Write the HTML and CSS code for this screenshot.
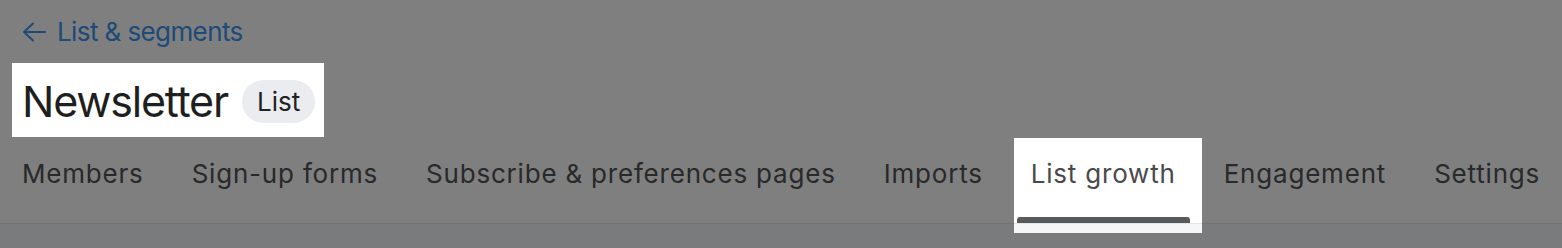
FILE: index.html
```html
<!DOCTYPE html>
<html lang="en">
<head>
<meta charset="utf-8">
<title>Newsletter</title>
<link rel="stylesheet" href="styles.css">
</head>
<body>
<div class="page">
  <header class="head">
    <a class="back" href="#">
      <svg class="back-icon" width="24" height="20" viewBox="0 0 24 20" aria-hidden="true">
        <path d="M23 10H2M11 1.5L2 10l9 8.5" fill="none" stroke="currentColor" stroke-width="2" stroke-linecap="round" stroke-linejoin="round"/>
      </svg>
      <span>List &amp; segments</span>
    </a>
    <div class="title-row">
      <h1 class="title">Newsletter</h1>
      <span class="badge">List</span>
    </div>
  </header>
  <nav class="tabs">
    <a class="tab" href="#"><span class="tab-label">Members</span><span class="tab-bar"></span></a>
    <a class="tab" href="#"><span class="tab-label">Sign-up forms</span><span class="tab-bar"></span></a>
    <a class="tab" href="#"><span class="tab-label">Subscribe &amp; preferences pages</span><span class="tab-bar"></span></a>
    <a class="tab" href="#"><span class="tab-label">Imports</span><span class="tab-bar"></span></a>
    <a class="tab tab-active" href="#"><span class="tab-label">List growth</span><span class="tab-bar"></span></a>
    <a class="tab" href="#"><span class="tab-label">Engagement</span><span class="tab-bar"></span></a>
    <a class="tab" href="#"><span class="tab-label">Settings</span><span class="tab-bar"></span></a>
  </nav>
  <main class="content"></main>
</div>
<div class="spotlight-overlay"></div>
</body>
</html>
```

FILE: styles.css
```css
* {
  box-sizing: border-box;
}

html, body {
  margin: 0;
  padding: 0;
  height: 100%;
}

body {
  font-family: Inter, "Noto Sans", "Liberation Sans", sans-serif;
  background: #f5f6f8;
  color: #222222;
  overflow: hidden;
}

.page {
  display: flex;
  flex-direction: column;
  min-height: 100%;
}

.head {
  background: #ffffff;
  padding: 16px 22px 0 22px;
  display: flex;
  flex-direction: column;
}

.back {
  display: inline-flex;
  align-items: center;
  gap: 11px;
  align-self: flex-start;
  color: #3a94f0;
  text-decoration: none;
  font-size: 26px;
  line-height: 32px;
  letter-spacing: -0.6px;
}

.back-icon {
  display: block;
}

.title-row {
  margin-top: 27px;
  display: flex;
  align-items: center;
  gap: 14px;
}

.title {
  margin: 0;
  font-size: 43px;
  line-height: 52px;
  font-weight: 400;
  letter-spacing: -1.2px;
  color: #1f1f1f;
}

.badge {
  display: inline-flex;
  align-items: center;
  height: 43px;
  padding: 0 15px;
  border-radius: 22px;
  background: #ebecef;
  font-size: 26px;
  color: #222222;
}

.tabs {
  background: #ffffff;
  display: flex;
  gap: 18px;
  padding: 11px 0 0 7px;
  border-bottom: 1px solid #e4e5e8;
}

.tab {
  display: flex;
  flex-direction: column;
  text-decoration: none;
  color: #515254;
}

.tab-label {
  font-size: 26px;
  line-height: 32px;
  letter-spacing: 0.8px;
  padding: 20px 15px 0 15px;
  white-space: nowrap;
}

.tab-bar {
  margin: 27px 1px 0 1px;
  height: 6px;
  border-radius: 3px 3px 0 0;
  background: transparent;
}

.tab-active .tab-label {
  color: #4a4a4c;
}

.tab-active .tab-bar {
  background: #58595b;
}

.content {
  flex: 1;
  background: #f5f6f8;
}

.spotlight-overlay {
  position: fixed;
  inset: 0;
  background: rgba(0, 0, 0, 0.5);
  clip-path: path(evenodd, "M0 0H1562V248H0Z M12 63H324V137H12Z M1014 138H1202V233H1014Z");
  pointer-events: none;
}
```
